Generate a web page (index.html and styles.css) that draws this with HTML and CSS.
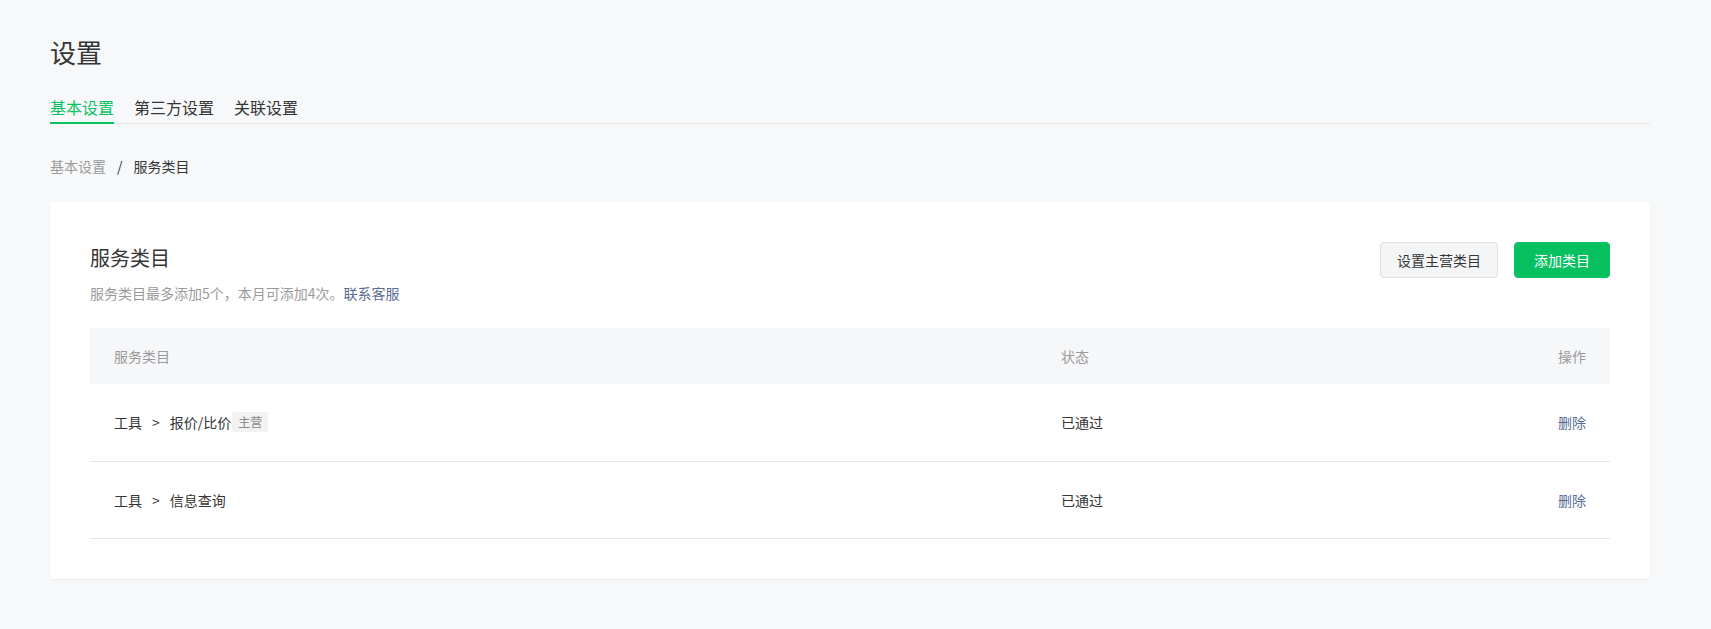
FILE: index.html
```html
<!DOCTYPE html>
<html lang="zh-CN">
<head>
    <meta charset="UTF-8">
    <meta name="viewport" content="width=device-width, initial-scale=1.0">
    <title>设置 - 服务类目</title>
    <link rel="stylesheet" href="styles.css">
</head>
<body>
    <main class="page">
        <h1 class="page-title">设置</h1>

        <nav class="tabs">
            <a href="#" class="tab active">基本设置</a>
            <a href="#" class="tab">第三方设置</a>
            <a href="#" class="tab">关联设置</a>
        </nav>

        <div class="breadcrumb">
            <a href="#" class="crumb-link">基本设置</a>
            <span class="crumb-sep">/</span>
            <span class="crumb-current">服务类目</span>
        </div>

        <section class="card">
            <div class="card-header">
                <div>
                    <h2 class="card-title">服务类目</h2>
                    <p class="card-desc">服务类目最多添加5个，本月可添加4次。<a href="#" class="link">联系客服</a></p>
                </div>
                <div class="actions">
                    <button class="btn btn-default">设置主营类目</button>
                    <button class="btn btn-primary">添加类目</button>
                </div>
            </div>

            <table class="category-table">
                <thead>
                    <tr>
                        <th class="col-name">服务类目</th>
                        <th>状态</th>
                        <th class="col-op">操作</th>
                    </tr>
                </thead>
                <tbody>
                    <tr>
                        <td>工具<span class="arrow">&gt;</span>报价/比价<span class="tag">主营</span></td>
                        <td>已通过</td>
                        <td class="col-op"><a href="#" class="link">删除</a></td>
                    </tr>
                    <tr>
                        <td>工具<span class="arrow">&gt;</span>信息查询</td>
                        <td>已通过</td>
                        <td class="col-op"><a href="#" class="link">删除</a></td>
                    </tr>
                </tbody>
            </table>
        </section>
    </main>
</body>
</html>
```

FILE: styles.css
```css
:root {
    --primary: #07c160;
    --link: #576b95;
    --background: #f7f8fa;
    --foreground: #353535;
    --muted: #9a9a9a;
    --border: #e5e5e5;
    --table-head: #f6f7f9;
}
* {
    margin: 0;
    padding: 0;
    box-sizing: border-box;
}
body {
    font-family: "Noto Sans CJK SC", "Noto Sans", sans-serif;
    font-size: 14px;
    line-height: 22px;
    color: var(--foreground);
    background-color: var(--background);
}
a {
    text-decoration: none;
}
.page {
    padding: 34px 61px 51px 50px;
}
.page-title {
    font-size: 26px;
    line-height: 36px;
    font-weight: normal;
}

/* Tabs */
.tabs {
    display: flex;
    gap: 20px;
    margin-top: 25px;
    border-bottom: 1px solid var(--border);
}
.tab {
    font-size: 16px;
    line-height: 24px;
    padding-bottom: 3px;
    margin-bottom: -1px;
    color: var(--foreground);
    border-bottom: 2px solid transparent;
}
.tab.active {
    color: var(--primary);
    border-bottom-color: var(--primary);
}

/* Breadcrumb */
.breadcrumb {
    margin-top: 31px;
    display: flex;
}
.crumb-link {
    color: var(--muted);
}
.crumb-sep {
    margin: 0 11px;
}

/* Card */
.card {
    margin-top: 25px;
    background-color: #fff;
    border-radius: 4px;
    box-shadow: 0 1px 2px rgba(0, 0, 0, 0.06);
    padding: 40px;
}
.card-header {
    display: flex;
    justify-content: space-between;
    align-items: flex-start;
    margin-bottom: 24px;
}
.card-title {
    font-size: 20px;
    line-height: 32px;
    font-weight: normal;
}
.card-desc {
    margin-top: 8px;
    color: var(--muted);
}
.link {
    color: var(--link);
}
.actions {
    display: flex;
    gap: 16px;
}
.btn {
    height: 36px;
    min-width: 96px;
    padding: 0 16px;
    border-radius: 4px;
    font-family: inherit;
    font-size: 14px;
    cursor: pointer;
}
.btn-default {
    background-color: #f4f5f7;
    border: 1px solid #dcdee2;
    color: var(--foreground);
}
.btn-primary {
    background-color: var(--primary);
    border: 1px solid var(--primary);
    color: #fff;
}

/* Table */
.category-table {
    width: 100%;
    border-collapse: collapse;
}
.category-table th {
    height: 56px;
    padding: 0 24px;
    text-align: left;
    font-weight: normal;
    color: var(--muted);
    background-color: var(--table-head);
}
.category-table td {
    height: 77px;
    padding: 0 24px;
    border-bottom: 1px solid var(--border);
}
.category-table .col-name {
    width: 947px;
}
.category-table .col-op {
    text-align: right;
}
.arrow {
    margin: 0 10px;
}
.tag {
    display: inline-block;
    margin-left: 1px;
    padding: 0 6px;
    font-size: 12px;
    line-height: 20px;
    color: #888;
    background-color: #f2f2f2;
    border-radius: 2px;
    vertical-align: 1px;
}
```
